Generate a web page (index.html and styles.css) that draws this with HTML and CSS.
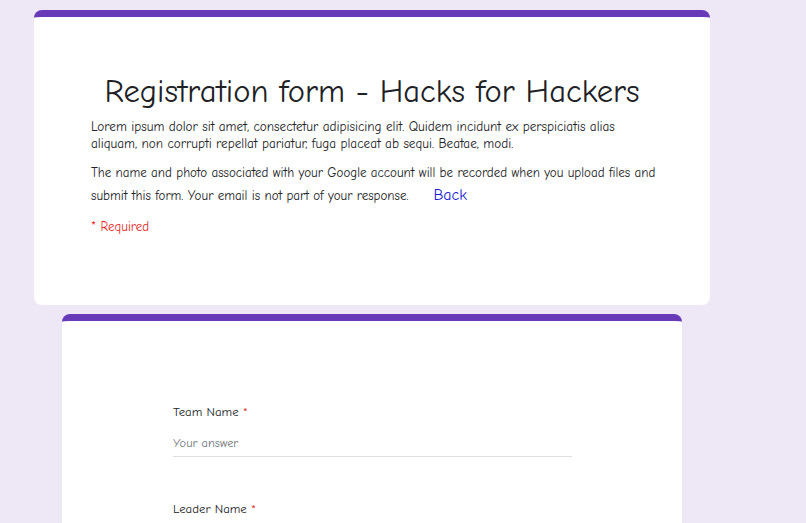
FILE: index.html
```html
<!DOCTYPE html>
<html lang="en">
<head>
<meta charset="utf-8">
<title>Registration form - Hacks for Hackers</title>
<link rel="stylesheet" href="styles.css">
</head>
<body>
<main class="page">
  <section class="card header-card">
    <h1 class="title">Registration form - Hacks for Hackers</h1>
    <p class="desc">Lorem ipsum dolor sit amet, consectetur adipisicing elit. Quidem incidunt ex perspiciatis alias aliquam, non corrupti repellat pariatur, fuga placeat ab sequi. Beatae, modi.</p>
    <p class="notice">The name and photo associated with your Google account will be recorded when you upload files and submit this form. Your email is not part of your response.<a class="back" href="#">Back</a></p>
    <p class="required">* Required</p>
  </section>
  <section class="card form-card">
    <div class="question">
      <label class="q-label" for="team">Team Name <span class="star">*</span></label>
      <input class="answer" id="team" type="text" placeholder="Your answer">
    </div>
    <div class="question">
      <label class="q-label" for="leader">Leader Name <span class="star">*</span></label>
      <input class="answer" id="leader" type="text" placeholder="Your answer">
    </div>
  </section>
</main>
</body>
</html>
```
FILE: styles.css
```css
html, body {
  margin: 0;
  padding: 0;
}
body {
  background: #ede7f6;
  font-family: "Comic Sans MS", "Comic Neue", "Noto Sans", sans-serif;
  color: #202124;
  overflow: hidden;
}
.page {
  display: flex;
  flex-direction: column;
  align-items: flex-start;
  padding-top: 10px;
  gap: 9px;
}
.card {
  background: #ffffff;
  border-top: 7px solid #673ab7;
  border-radius: 8px;
  box-sizing: border-box;
}
.header-card {
  margin-left: 34px;
  width: 676px;
  height: 295px;
  padding: 55px 50px 0 57px;
}
.title {
  margin: 0 0 0 -7px;
  font-size: 32.6px;
  font-weight: 400;
  line-height: 40px;
  text-align: center;
  color: #202124;
}
.desc {
  margin: 6px 0 0 0;
  font-size: 13.2px;
  line-height: 17px;
  max-width: 562px;
}
.notice {
  margin: 9px 0 0 0;
  font-size: 13px;
  line-height: 23px;
}
.back {
  display: inline-block;
  margin-left: 25px;
  font-size: 16px;
  line-height: 20px;
  color: #1a1ad6;
  text-decoration: none;
}
.required {
  margin: 11px 0 0 0;
  font-size: 13px;
  line-height: 17px;
  color: #e81f1f;
}
.form-card {
  margin-left: 62px;
  width: 620px;
  height: 260px;
  padding: 81px 111px 0 111px;
  display: flex;
  flex-direction: column;
  gap: 42px;
}
.question {
  display: flex;
  flex-direction: column;
  width: 399px;
}
.q-label {
  font-size: 12.8px;
  line-height: 20px;
  color: #202124;
}
.star {
  color: #d93025;
}
.answer {
  margin-top: 12px;
  border: none;
  border-bottom: 1px solid #e0e0e0;
  padding: 0 0 4px 0;
  font-family: inherit;
  font-size: 12.4px;
  line-height: 18px;
  color: #202124;
  background: transparent;
  outline: none;
}
.answer::placeholder {
  color: #70757a;
}
```
